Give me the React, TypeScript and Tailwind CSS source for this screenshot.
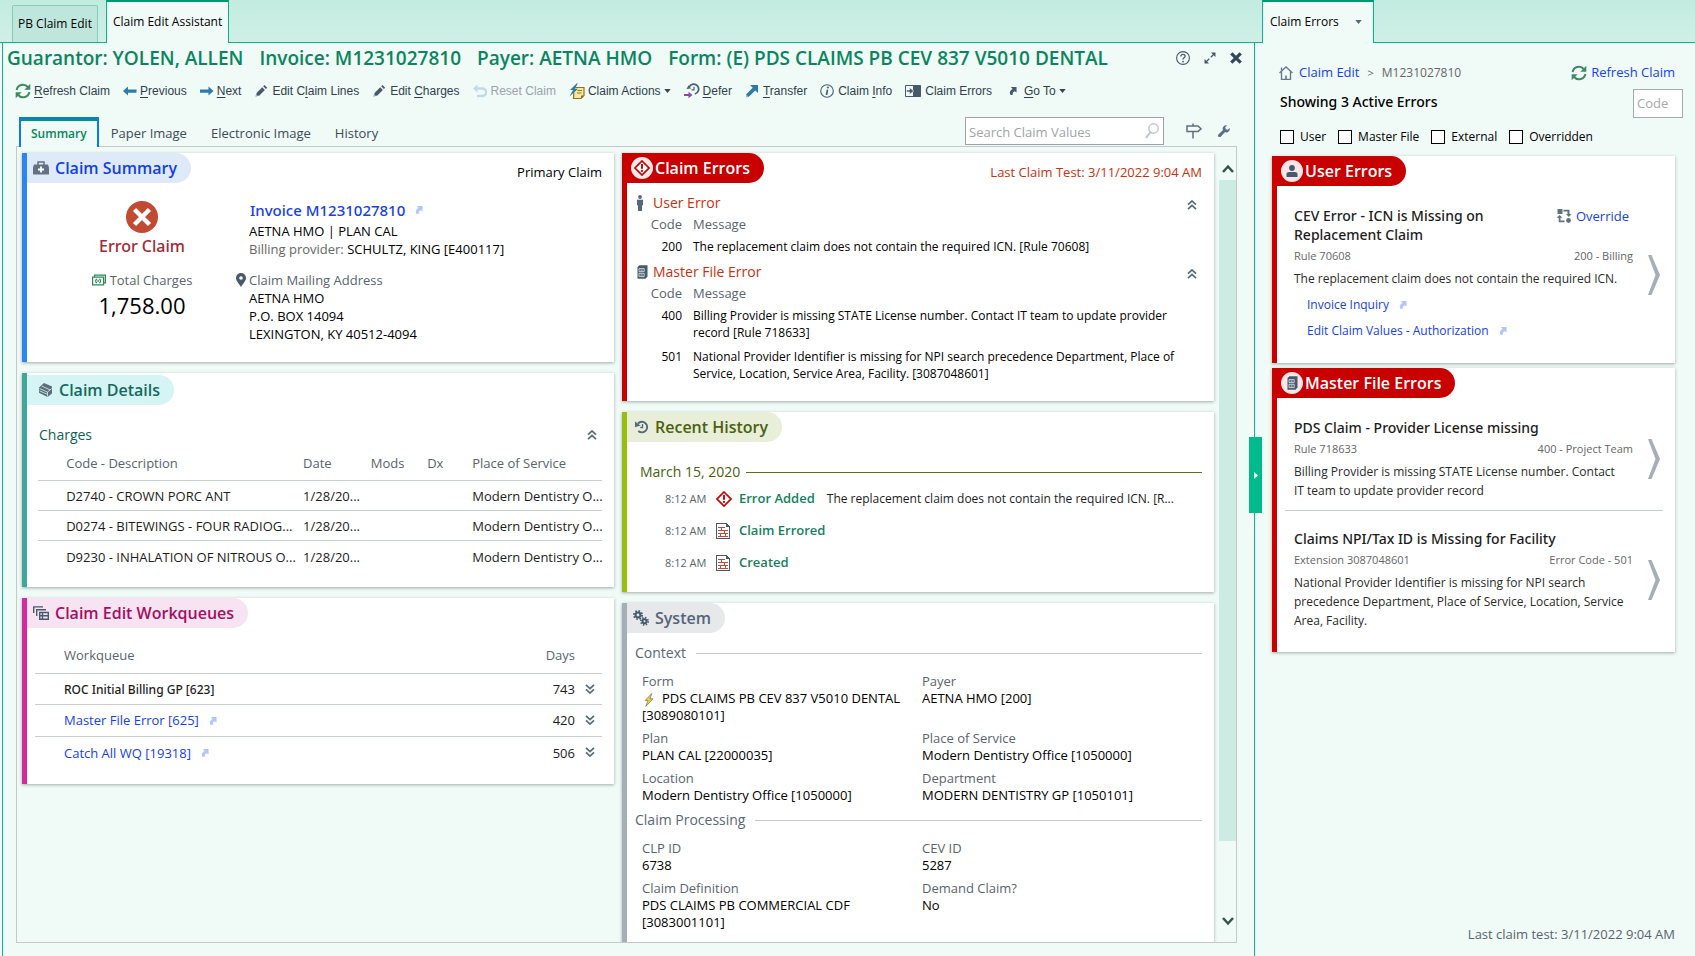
import React, { ReactNode } from "react";

/* ---------- icons ---------- */

type IconProps = { className?: string };

const RefreshIcon = ({ className = "size-4" }: IconProps) => (
  <svg viewBox="0 0 16 16" className={className} fill="none" stroke="#3f8a63" strokeWidth="2" aria-hidden="true">
    <path d="M1.6 7A6.400 6.400 0 0 1 12.800 4" />
    <path d="M14.400 9A6.400 6.400 0 0 1 3.200 12" />
    <path d="M15.300.8v6h-6z" fill="#3f8a63" stroke="none" />
    <path d="M.7 15.200v-6h6z" fill="#3f8a63" stroke="none" />
  </svg>
);

const ArrowIcon = ({ flip = false }: { flip?: boolean }) => (
  <svg viewBox="0 0 14 12" className="h-3 w-3.5" fill="#2f7ba8" aria-hidden="true">
    {flip ? <path d="M0 6l5-4.500v3h8.500v3.200H5v2.800z" /> : <path d="M13.500 6L8.500 1.500v3H0v3.200h8.500v2.800z" />}
  </svg>
);

const PencilIcon = () => (
  <svg viewBox="0 0 14 14" className="size-3.5" fill="#46596d" aria-hidden="true">
    <path d="M1.500 12.500l1.300-3.700L8.200 3.300l2.700 2.700-5.500 5.500z" />
    <path d="M9.200 2.300l1.300-1.300 2.700 2.700-1.300 1.300z" />
    <path d="M1.500 12.500l.8-2.300 1.500 1.500z" fill="#a9b8c4" />
  </svg>
);

const UndoIcon = () => (
  <svg viewBox="0 0 14 14" className="size-3.5" aria-hidden="true">
    <path d="M0 4.500L4.500.5v8z" fill="#c3dae6" />
    <path d="M3.500 4.500h6a3.500 3.500 0 0 1 0 7.500H4" fill="none" stroke="#c3dae6" strokeWidth="2.400" />
  </svg>
);

const ClaimActionsIcon = () => (
  <svg viewBox="0 0 16 16" className="size-4" aria-hidden="true">
    <path d="M5 4.500h10v8l-3 3H4.500z" fill="#f6e9a0" stroke="#8d7420" strokeWidth="1.200" />
    <path d="M15 12.500h-3v3z" fill="#8d7420" />
    <path d="M8.500 7.500h4.500M8 10h4.500" stroke="#8d7420" strokeWidth="1.100" />
    <path d="M7.500.5L1 7h3L.5 13.500 9 5.800H5.800L8.800.5z" fill="#2f7ba8" />
  </svg>
);

const DeferIcon = () => (
  <svg viewBox="0 0 16 16" className="size-4" fill="none" aria-hidden="true">
    <path d="M5.200 3.800A5 5 0 1 1 10.800 11" stroke="#4c6076" strokeWidth="1.800" />
    <path d="M10 3.800v3H7.500" stroke="#4c6076" strokeWidth="1.200" />
    <path d="M2.500 6L4.500 2.200l2.600 3.300z" fill="#4c6076" />
    <path d="M0 12h5" stroke="#8a4aa8" strokeWidth="2" />
    <path d="M4.500 8.800L8.500 12l-4 3.200z" fill="#8a4aa8" />
  </svg>
);

const TransferIcon = () => (
  <svg viewBox="0 0 14 14" className="size-3.5" aria-hidden="true">
    <path d="M5 1h8v8l-2.700-2.600-6.800 6.500L1 10.400l6.700-6.700z" fill="#2f7ba8" />
    <path d="M1 10.400l2.500 2.500L1 13.500z" fill="#8fb9cf" />
  </svg>
);

const InfoIcon = () => (
  <svg viewBox="0 0 16 16" className="size-3.5" fill="none" stroke="#4c6076" aria-hidden="true">
    <circle cx="8" cy="8" r="7.200" strokeWidth="1.300" />
    <path d="M8.600 6.500l-1.200 6" strokeWidth="2" />
    <circle cx="9" cy="4" r="1.200" fill="#4c6076" stroke="none" />
  </svg>
);

const PanelArrowIcon = () => (
  <svg viewBox="0 0 16 12" className="h-3 w-4" aria-hidden="true">
    <path d="M.5.5h15v11H.5z" fill="#f0faf7" stroke="#46596d" />
    <path d="M8 .5h7.500v11H8z" fill="#46596d" />
    <path d="M1.500 5h3V2.500L8.800 6 4.500 9.500V7h-3z" fill="#46596d" stroke="#f0faf7" strokeWidth=".6" />
  </svg>
);

const JumpIcon = ({ className = "size-2 text-[#b3c5ff]" }: IconProps) => (
  <svg viewBox="0 0 8 9" className={className} fill="currentColor" aria-hidden="true">
    <path d="M1.500 0H8v6.300L6.200 4.700C4.300 5.200 3.400 6.300 3.600 9H1.400C-.6 6.800.4 4 3.600 2.200z" />
  </svg>
);

const CaretDown = ({ className = "h-1 w-1.5 text-[#39444e]" }: IconProps) => (
  <svg viewBox="0 0 8 5" className={className} fill="currentColor" aria-hidden="true">
    <path d="M0 0h8L4 5z" />
  </svg>
);

const HelpIcon = () => (
  <svg viewBox="0 0 14 14" className="size-3.5" fill="none" stroke="#46596d" aria-hidden="true">
    <circle cx="7" cy="7" r="6.400" strokeWidth="1.100" />
    <path d="M4.900 5.400c0-2.800 4.200-2.700 4.200-.2 0 1.500-2.100 1.500-2.100 3.200" strokeWidth="1.300" />
    <circle cx="7" cy="10.600" r=".9" fill="#46596d" stroke="none" />
  </svg>
);

const ExpandIcon = () => (
  <svg viewBox="0 0 12 12" className="size-3" aria-hidden="true">
    <path d="M7 .5h4.500V5zM.5 7v4.500H5z" fill="#46596d" />
    <path d="M10 2L6.800 5.200M2 10l3.200-3.200" stroke="#46596d" strokeWidth="1.300" />
  </svg>
);

const CloseIcon = () => (
  <svg viewBox="0 0 12 12" className="size-3" aria-hidden="true">
    <path d="M1.300 1.300l9.400 9.400M10.700 1.300l-9.400 9.400" stroke="#33475b" strokeWidth="3.200" />
  </svg>
);

const SearchIcon = () => (
  <svg viewBox="0 0 14 16" className="h-4 w-3.5" fill="none" stroke="#bfc6cb" aria-hidden="true">
    <circle cx="8.500" cy="5.500" r="4.700" strokeWidth="1.400" />
    <path d="M5.400 9.200L1 14.800" strokeWidth="2" />
  </svg>
);

const SignpostIcon = () => (
  <svg viewBox="0 0 16 16" className="size-4" fill="none" stroke="#5b7083" strokeWidth="1.500" aria-hidden="true">
    <path d="M1 3h11l3 2.800-3 2.700H1z" />
    <path d="M7 .5V3M7 8.500v7" />
  </svg>
);

const WrenchIcon = () => (
  <svg viewBox="0 0 13 13" className="size-3" fill="#5b7083" aria-hidden="true">
    <path d="M12.600 3.200a3.700 3.700 0 0 1-5 4.500l-4.600 4.900a1.700 1.700 0 0 1-2.500-2.400l4.900-4.700A3.700 3.700 0 0 1 9.800.400L7.900 2.500l.5 2.100 2.100.5z" />
  </svg>
);

const DoubleChevron = ({ down = false }: { down?: boolean }) => (
  <svg viewBox="0 0 10 10" className="size-2.5" fill="none" stroke="#55697c" strokeWidth="1.700" aria-hidden="true">
    {down ? <path d="M1 .8l4 3.700 4-3.700M1 5.300L5 9l4-3.700" /> : <path d="M1 9.200l4-3.700 4 3.700M1 4.700L5 1l4 3.700" />}
  </svg>
);

const MedKitIcon = () => (
  <svg viewBox="0 0 16 14" className="h-3.5 w-4" aria-hidden="true">
    <path d="M5 4V1h6v3" fill="none" stroke="#607284" strokeWidth="1.500" />
    <path d="M1 3.500h14l1 3V13.500H0V6.500z" fill="#607284" />
    <path d="M8 5.500v6M5 8.500h6" stroke="#fff" strokeWidth="1.800" />
  </svg>
);

const BooksIcon = () => (
  <svg viewBox="0 0 14 14" className="size-3.5" aria-hidden="true">
    <path d="M0 4.500L5 0l8 3.500v7L8.500 14 0 9.800z" fill="#5c6e78" />
    <path d="M.5 5.500l8 3.600 4.300-3.700M.5 7.800l7.900 3.500M2.600 3l8.400 3.800M8.500 9v4.500" fill="none" stroke="#d4f5f3" strokeWidth=".8" />
  </svg>
);

const QueueIcon = () => (
  <svg viewBox="0 0 16 14" className="h-3.5 w-4" fill="none" stroke="#46596d" strokeWidth="1.400" aria-hidden="true">
    <path d="M.7 7V.9H10M3.700 10V3.700H13" />
    <path d="M6.700 6.500h8.600v6.800H6.700zM6.700 9.800h8.600M9.500 6.500v6.800" />
  </svg>
);

const AlertDiamond = ({ className = "size-4" }: IconProps) => (
  <svg viewBox="0 0 16 16" className={className} aria-hidden="true">
    <path d="M8 1l7 7-7 7-7-7z" fill="#fff" stroke="#c80000" strokeWidth="1.700" />
    <path d="M8 4v4.800" stroke="#c80000" strokeWidth="1.900" />
    <circle cx="8" cy="10.900" r="1.100" fill="#c80000" />
  </svg>
);

const PersonIcon = () => (
  <svg viewBox="0 0 6 16" className="h-4 w-1.5" fill="#55697c" aria-hidden="true">
    <circle cx="3" cy="2" r="1.900" />
    <path d="M0 4.800h6v5.400H5V16H1v-5.800H0z" />
  </svg>
);

const BustIcon = () => (
  <svg viewBox="0 0 12 12" className="size-3" fill="#46596d" aria-hidden="true">
    <circle cx="6" cy="3" r="2.900" />
    <path d="M.5 12V9.200c0-1.500 1-2.200 2.500-2.200h6c1.500 0 2.500.7 2.500 2.200V12z" />
  </svg>
);

const CabinetIcon = () => (
  <svg viewBox="0 0 11 14" className="h-3.5 w-[11px]" aria-hidden="true">
    <path d="M.5 2L2.500.3h8v11.200l-2 2.200h-8z" fill="#46596d" />
    <path d="M2 3.600h5.200v3H2zM2 8.300h5.200v3.300H2z" fill="none" stroke="#e4e9ed" strokeWidth=".8" />
    <path d="M3.600 5.100h2M3.600 10h2" stroke="#e4e9ed" strokeWidth=".9" />
  </svg>
);

const HistoryIcon = () => (
  <svg viewBox="0 0 14 14" className="size-3.5" fill="none" aria-hidden="true">
    <path d="M3 3.500A5.300 5.300 0 1 1 3.300 11" stroke="#55697c" strokeWidth="1.900" />
    <path d="M0 1.500L5.500 5.500 0 7.300z" fill="#55697c" />
    <path d="M7.500 4v3.500H5.300" stroke="#55697c" strokeWidth="1.300" />
  </svg>
);

const GearsIcon = () => (
  <svg viewBox="0 0 16 16" className="size-4" fill="none" stroke="#46596d" aria-hidden="true">
    <circle cx="5" cy="5" r="2.400" strokeWidth="2" />
    <circle cx="5" cy="5" r="4.100" strokeWidth="1.800" strokeDasharray="1.600 1.620" />
    <circle cx="11.500" cy="11.300" r="2" strokeWidth="1.900" />
    <circle cx="11.500" cy="11.300" r="3.600" strokeWidth="1.800" strokeDasharray="1.400 1.427" />
  </svg>
);

const CashIcon = () => (
  <svg viewBox="0 0 14 11" className="h-3 w-3.5" fill="none" stroke="#2e8557" strokeWidth="1.200" aria-hidden="true">
    <path d="M2.500 2.300V.7h10.900v7.600h-1.500" />
    <path d="M.6 2.600h11v7.700H.6z" />
    <path d="M5 4.600c-1.800.3-1.800 3.400 0 3.700M7.200 4.600c1.800.3 1.800 3.400 0 3.700M6.100 5.300v2.300" />
  </svg>
);

const PinIcon = () => (
  <svg viewBox="0 0 10 14" className="h-3.5 w-2.5" aria-hidden="true">
    <path d="M5 14C2.500 10 0 7.800 0 5a5 5 0 0 1 10 0c0 2.800-2.500 5-5 9z" fill="#46596d" />
    <circle cx="5" cy="5" r="1.800" fill="#fff" />
  </svg>
);

const DocErrorIcon = () => (
  <svg viewBox="0 0 14 16" className="h-4 w-3.5" fill="none" shapeRendering="crispEdges" aria-hidden="true">
    <path d="M.5.5h10l3 3v12H.5z" fill="#fff" stroke="#46596d" />
    <path d="M10 1v3h3z" fill="#46596d" />
    <path d="M2 4.500h7M2 7.500h10M2 10.500h10M2 13.500h10" stroke="#c24a32" />
    <path d="M5.500 5v2M8.500 8v2M4.500 11v2M9.500 11v2" stroke="#c24a32" />
  </svg>
);

const BoltIcon = () => (
  <svg viewBox="0 0 10 15" className="mr-2 ml-0.5 inline h-3.5 w-2.5" aria-hidden="true">
    <path d="M8 .5L1 8h3L1.500 14.500 9.300 6.200H6z" fill="#efd24a" stroke="#7d7350" strokeWidth=".8" />
  </svg>
);

const HomeIcon = () => (
  <svg viewBox="0 0 14 14" className="size-3.5" fill="none" stroke="#64788a" strokeWidth="1.300" aria-hidden="true">
    <path d="M.5 7L7 1l6.500 6" />
    <path d="M2.500 5.500v7.800h9V5.500M2.500 4.500V1.500" />
    <path d="M7 13.300V9.500" strokeWidth="1.600" />
  </svg>
);

const OverrideIcon = () => (
  <svg viewBox="0 0 15 14" className="h-3.5 w-4" fill="#607284" aria-hidden="true">
    <path d="M1 0h5v5H1zM7 .8h6v4.200h2L12.300 8 9.500 5H11V2.600H7zM3 6l3 2.800H4v2.600h4v1.800H2.200V8.800H0z" />
    <circle cx="12" cy="11.500" r="2.400" />
  </svg>
);

/* ---------- shared parts ---------- */

function Card({
  bar,
  pill,
  icon,
  title,
  aside,
  className = "",
  children,
}: {
  bar: string;
  pill: string;
  icon: ReactNode;
  title: string;
  aside?: ReactNode;
  className?: string;
  children: ReactNode;
}) {
  return (
    <section className={`border-l-5 bg-white shadow-[0_1px_3px_rgba(60,80,75,0.45)] ${bar} ${className}`}>
      <header className="flex items-start justify-between">
        <h2 className={`flex h-[30px] items-center rounded-r-full text-base font-semibold ${pill}`}>
          {icon}
          {title}
        </h2>
        {aside}
      </header>
      {children}
    </section>
  );
}

const RoundBadge = ({ children }: { children: ReactNode }) => (
  <span className="flex size-[22px] items-center justify-center rounded-full bg-[#fae6e6]">{children}</span>
);

/* ---------- toolbar ---------- */

const TOOLS: { icon: ReactNode; before?: string; key?: string; after?: string; caret?: boolean; disabled?: boolean; gap: string }[] = [
  { icon: <RefreshIcon />, key: "R", after: "efresh Claim", gap: "gap-[3px]" },
  { icon: <ArrowIcon flip />, key: "P", after: "revious", gap: "gap-[3px]" },
  { icon: <ArrowIcon />, key: "N", after: "ext", gap: "gap-[3px]" },
  { icon: <PencilIcon />, before: "Edit C", key: "l", after: "aim Lines", gap: "gap-1" },
  { icon: <PencilIcon />, before: "Edit ", key: "C", after: "harges", gap: "gap-1" },
  { icon: <UndoIcon />, before: "Reset Claim", disabled: true, gap: "gap-1" },
  { icon: <ClaimActionsIcon />, before: "Claim Actions", caret: true, gap: "gap-[3px]" },
  { icon: <DeferIcon />, key: "D", after: "efer", gap: "gap-[3px]" },
  { icon: <TransferIcon />, key: "T", after: "ransfer", gap: "gap-1" },
  { icon: <InfoIcon />, before: "Claim ", key: "I", after: "nfo", gap: "gap-1" },
  { icon: <PanelArrowIcon />, before: "Claim Errors", gap: "gap-1" },
  { icon: <JumpIcon className="mr-1 ml-1 size-2 text-[#46596d]" />, key: "G", after: "o To", caret: true, gap: "gap-[3px]" },
];

function Toolbar() {
  return (
    <div className="flex h-8 items-center gap-[13px] pl-3 font-['Liberation_Sans',sans-serif] text-xs text-[#2f3f4b]">
      {TOOLS.map((t, i) => (
        <button key={i} type="button" disabled={t.disabled} className={`flex items-center whitespace-nowrap disabled:text-[#9aa3a8] ${t.gap}`}>
          {t.icon}
          <span className="whitespace-pre">
            {t.before}
            {t.key && <span className="underline underline-offset-2">{t.key}</span>}
            {t.after}
          </span>
          {t.caret && <CaretDown className="h-1 w-[7px] text-[#39444e]" />}
        </button>
      ))}
    </div>
  );
}

/* ---------- left cards ---------- */

function ClaimSummary() {
  return (
    <Card
      bar="border-[#2b87ee]"
      pill="bg-[#dfeaf9] pr-3.5 pl-1.5 gap-1.5 text-[#1240e0]"
      icon={<MedKitIcon />}
      title="Claim Summary"
      aside={<span className="pt-2.5 pr-3 text-[13px] leading-[18px] text-black">Primary Claim</span>}
    >
      <div className="flex pb-[19px]">
        <div className="flex w-[209px] flex-col items-center pt-[18px] pl-[21px]">
          <svg viewBox="0 0 32 32" className="size-8" aria-hidden="true">
            <circle cx="16" cy="16" r="16" fill="#c24a32" />
            <path d="M8.500 8.500l15 15M23.500 8.500l-15 15" stroke="#fff" strokeWidth="4.500" />
          </svg>
          <div className="mt-0.5 font-['Noto_Sans',sans-serif] text-base leading-[22px] font-medium text-[#a02a35]">Error Claim</div>
          <div className="mt-3.5 flex items-center gap-1 text-[13px] leading-[18px] text-[#59646c]">
            <CashIcon />
            Total Charges
          </div>
          <div className="mt-0.5 text-[22px] leading-7 text-black">1,758.00</div>
        </div>
        <div className="pt-[15px] text-[13px] leading-[18px] text-black">
          <a href="#invoice" className="flex h-6 items-center gap-2.5 pl-3.5 font-['Noto_Sans',sans-serif] text-[15px] font-medium text-[#1540f0]">
            Invoice M1231027810
            <JumpIcon />
          </a>
          <p className="pl-[13px]">AETNA HMO | PLAN CAL</p>
          <p className="pl-[13px]">
            <span className="text-[#666]">Billing provider:</span> SCHULTZ, KING [E400117]
          </p>
          <div className="mt-[13px] flex items-center gap-[3px] text-[#59646c]">
            <PinIcon />
            Claim Mailing Address
          </div>
          <address className="pl-[13px] not-italic">
            AETNA HMO
            <br />
            P.O. BOX 14094
            <br />
            LEXINGTON, KY 40512-4094
          </address>
        </div>
      </div>
    </Card>
  );
}

const CHARGES = ["D2740 - CROWN PORC ANT", "D0274 - BITEWINGS - FOUR RADIOG...", "D9230 - INHALATION OF NITROUS O..."];

function ClaimDetails() {
  return (
    <Card
      bar="border-[#3fa699]"
      pill="bg-[#d4f5f3] pr-3.5 pl-3 gap-1.5 text-[#14695f]"
      icon={<BooksIcon />}
      title="Claim Details"
      className="pt-0.5 pb-[17px]"
    >
      <div className="mt-[18px] flex h-6 items-center justify-between pr-[17px] pl-3">
        <h3 className="text-sm text-[#0f5f57]">Charges</h3>
        <button type="button" aria-label="Collapse charges">
          <DoubleChevron />
        </button>
      </div>
      <div className="pr-3 pl-[11px]">
        <table className="w-full table-fixed text-left text-[13px] text-[#1c1c1c]">
          <colgroup>
            <col className="w-[5%]" />
            <col className="w-[42%]" />
            <col className="w-[12%]" />
            <col className="w-[10%]" />
            <col className="w-[8%]" />
            <col />
          </colgroup>
          <thead>
            <tr className="h-[33px] border-b border-[#c9cfcf] text-[#59646c]">
              <th />
              <th className="font-normal">Code - Description</th>
              <th className="font-normal">Date</th>
              <th className="font-normal">Mods</th>
              <th className="font-normal">Dx</th>
              <th className="font-normal">Place of Service</th>
            </tr>
          </thead>
          <tbody>
            {CHARGES.map((c) => (
              <tr key={c} className="h-[30px] border-b border-[#c9cfcf] whitespace-nowrap last:border-b-0">
                <td />
                <td className="pt-1">{c}</td>
                <td className="pt-1">1/28/20...</td>
                <td />
                <td />
                <td className="pt-1">Modern Dentistry O...</td>
              </tr>
            ))}
          </tbody>
        </table>
      </div>
    </Card>
  );
}

const QUEUES = [
  { name: "ROC Initial Billing GP [623]", days: 743, link: false },
  { name: "Master File Error [625]", days: 420, link: true },
  { name: "Catch All WQ [19318]", days: 506, link: true },
];

function Workqueues() {
  return (
    <Card
      bar="border-[#d42aa0]"
      pill="bg-[#f8e3f2] pr-3.5 pl-1.5 gap-1.5 text-[#a3105f]"
      icon={<QueueIcon />}
      title="Claim Edit Workqueues"
      className="pb-4"
    >
      <div className="mt-[11px] pr-3 pl-2">
        <table className="w-full text-left text-[13px] text-[#1c1c1c]">
          <thead>
            <tr className="h-[34px] border-b border-[#c9cfcf] text-[#59646c]">
              <th className="pl-[29px] font-normal">Workqueue</th>
              <th className="text-right font-normal">Days</th>
              <th className="w-[27px]" />
            </tr>
          </thead>
          <tbody>
            {QUEUES.map((q) => (
              <tr key={q.name} className="h-8 border-b border-[#c9cfcf] first:h-[31px] last:border-b-0">
                <td className="pt-0.5 pl-[29px]">
                  {q.link ? (
                    <a href="#queue" className="flex items-center gap-2.5 text-[#1540f0]">
                      {q.name}
                      <JumpIcon />
                    </a>
                  ) : (
                    <span className="font-['Noto_Sans',sans-serif] text-xs font-medium">{q.name}</span>
                  )}
                </td>
                <td className="pt-0.5 text-right">{q.days}</td>
                <td className="pl-2.5">
                  <button type="button" aria-label={`Expand ${q.name}`} className="block">
                    <DoubleChevron down />
                  </button>
                </td>
              </tr>
            ))}
          </tbody>
        </table>
      </div>
    </Card>
  );
}

/* ---------- middle cards ---------- */

function ErrorGroup({ icon, title, rows }: { icon: ReactNode; title: string; rows: [string, string][] }) {
  return (
    <div>
      <div className="flex h-5 items-center justify-between pr-[17px] pl-2">
        <h3 className="flex items-center text-sm text-[#c9300f]">
          <span className="flex w-[18px] items-center justify-start pl-0.5">{icon}</span>
          {title}
        </h3>
        <button type="button" aria-label={`Collapse ${title}`} className="pt-1">
          <DoubleChevron />
        </button>
      </div>
      <table className="mt-0.5 w-full text-xs">
        <thead>
          <tr className="text-[13px] text-[#59646c]">
            <th className="w-[55px] text-right leading-[18px] font-normal">Code</th>
            <th className="pl-[11px] text-left leading-[18px] font-normal">Message</th>
          </tr>
        </thead>
        <tbody>
          {rows.map(([code, msg]) => (
            <tr key={code} className="align-top text-black">
              <td className="pt-[5px] pb-0.5 text-right leading-[17px]">{code}</td>
              <td className="pt-[5px] pr-5 pb-0.5 pl-[11px] leading-[17px]">{msg}</td>
            </tr>
          ))}
        </tbody>
      </table>
    </div>
  );
}

function ClaimErrors() {
  return (
    <Card
      bar="border-[#c80000]"
      pill="bg-[#c80000] pr-3.5 pl-1 gap-0.5 text-white"
      icon={
        <RoundBadge>
          <AlertDiamond />
        </RoundBadge>
      }
      title="Claim Errors"
      className="pb-[17px]"
      aside={<span className="pt-2.5 pr-3 text-[13px] leading-[18px] text-[#c9300f]">Last Claim Test: 3/11/2022 9:04 AM</span>}
    >
      <div className="mt-2.5 flex flex-col gap-[5px]">
        <ErrorGroup icon={<PersonIcon />} title="User Error" rows={[["200", "The replacement claim does not contain the required ICN. [Rule 70608]"]]} />
        <ErrorGroup
          icon={<CabinetIcon />}
          title="Master File Error"
          rows={[
            ["400", "Billing Provider is missing STATE License number. Contact IT team to update provider record [Rule 718633]"],
            ["501", "National Provider Identifier is missing for NPI search precedence Department, Place of Service, Location, Service Area, Facility. [3087048601]"],
          ]}
        />
      </div>
    </Card>
  );
}

function RecentHistory() {
  const rows = [
    { icon: <AlertDiamond />, label: "Error Added", note: "The replacement claim does not contain the required ICN. [R..." },
    { icon: <DocErrorIcon />, label: "Claim Errored" },
    { icon: <DocErrorIcon />, label: "Created" },
  ];
  return (
    <Card
      bar="border-[#97bf0d]"
      pill="bg-[#e8eed8] pr-3.5 pl-2 gap-1.5 text-[#4a6010]"
      icon={<HistoryIcon />}
      title="Recent History"
      className="pb-[13px]"
    >
      <div className="mt-[19px] flex items-center gap-1.5 pr-3 pl-[13px] text-sm leading-[22px] text-[#4a6010]">
        March 15, 2020
        <span className="h-px flex-1 bg-[#5d7014]" />
      </div>
      <ul>
        {rows.map((r) => (
          <li key={r.label} className="flex h-8 items-center pr-3 pl-[38px] text-xs whitespace-nowrap">
            <span className="w-[50px] text-[11px] text-[#59646c]">8:12 AM</span>
            <span className="flex w-6 pl-px">{r.icon}</span>
            <span className="text-[13px] font-semibold text-[#16805c]">{r.label}</span>
            {r.note && <span className="pl-3 text-[#1c1c1c]">{r.note}</span>}
          </li>
        ))}
      </ul>
    </Card>
  );
}

function FieldGroup({ title, fields }: { title: string; fields: [string, ReactNode][] }) {
  return (
    <div>
      <h3 className="flex items-center gap-2.5 pr-3 pl-2 text-sm leading-[22px] text-[#59677a]">
        {title}
        <span className="h-px flex-1 bg-[#c4c8ca]" />
      </h3>
      <dl className="mt-2 grid grid-cols-[280px_1fr] gap-y-[5px] pl-[15px] text-[13px]">
        {fields.map(([label, value]) => (
          <div key={label}>
            <dt className="leading-[18px] text-[#59646c]">{label}</dt>
            <dd className="leading-[17px] text-black">{value}</dd>
          </div>
        ))}
      </dl>
    </div>
  );
}

function SystemCard() {
  return (
    <Card bar="border-[#a5afb8]" pill="bg-[#e6e8ea] pr-3.5 pl-1.5 gap-1.5 text-[#55647a]" icon={<GearsIcon />} title="System" className="pb-14">
      <div className="mt-[9px] flex flex-col gap-[5px]">
        <FieldGroup
          title="Context"
          fields={[
            [
              "Form",
              <>
                <BoltIcon />
                PDS CLAIMS PB CEV 837 V5010 DENTAL
                <br />
                [3089080101]
              </>,
            ],
            ["Payer", "AETNA HMO [200]"],
            ["Plan", "PLAN CAL [22000035]"],
            ["Place of Service", "Modern Dentistry Office [1050000]"],
            ["Location", "Modern Dentistry Office [1050000]"],
            ["Department", "MODERN DENTISTRY GP [1050101]"],
          ]}
        />
        <FieldGroup
          title="Claim Processing"
          fields={[
            ["CLP ID", "6738"],
            ["CEV ID", "5287"],
            [
              "Claim Definition",
              <>
                PDS CLAIMS PB COMMERCIAL CDF
                <br />
                [3083001101]
              </>,
            ],
            ["Demand Claim?", "No"],
          ]}
        />
      </div>
    </Card>
  );
}

/* ---------- right panel ---------- */

function ErrorItem({
  title,
  rule,
  code,
  text,
  override = false,
  links = [],
  className = "",
}: {
  title: string;
  rule: string;
  code: string;
  text: string;
  override?: boolean;
  links?: string[];
  className?: string;
}) {
  return (
    <article className={`flex items-center pl-[17px] ${className}`}>
      <div className="min-w-0 flex-1">
        <div className="flex items-start justify-between">
          <h3 className={`font-['Noto_Sans',sans-serif] text-sm leading-[19px] font-medium text-[#1c1c1c] ${override ? "w-[210px]" : ""}`}>{title}</h3>
          {override && (
            <button type="button" className="flex items-center gap-1 pr-1 text-[13px] leading-5 text-[#1540f0]">
              <OverrideIcon />
              Override
            </button>
          )}
        </div>
        <div className="mt-[3px] flex justify-between text-[11px] leading-[18px] text-[#666]">
          <span>{rule}</span>
          <span>{code}</span>
        </div>
        <p className="mt-1 pr-2 text-xs leading-[19px] text-[#2a2a2a]">{text}</p>
        {links.length > 0 && (
          <ul className="mt-1 pl-[13px] text-xs">
            {links.map((l) => (
              <li key={l} className="flex h-[26px] items-center">
                <a href="#edit" className="flex items-center gap-2.5 text-[#1540f0]">
                  {l}
                  <JumpIcon />
                </a>
              </li>
            ))}
          </ul>
        )}
      </div>
      <button type="button" aria-label={`Open ${title}`} className="ml-[15px] w-[27px]">
        <svg viewBox="0 0 12 40" className="h-10 w-3" aria-hidden="true">
          <path d="M0 0h3.500L12 20 3.500 40H0l7.500-20z" fill="#a5afb8" />
        </svg>
      </button>
    </article>
  );
}

function ErrorsPanel() {
  return (
    <div className="flex flex-1 flex-col bg-[#f0faf7] pt-3.5 pr-5 pl-[17px]">
      <div className="flex h-8 items-center justify-between pl-[7px]">
        <nav className="flex items-center gap-1.5 text-[13px] text-[#666]">
          <HomeIcon />
          <a href="#claim-edit" className="text-[#1540f0]">
            Claim Edit
          </a>
          <span className="px-0.5 text-[11px]">&gt;</span>
          <span className="text-xs">M1231027810</span>
        </nav>
        <button type="button" className="flex items-center gap-1 text-[13px] text-[#1540f0]">
          <RefreshIcon />
          Refresh Claim
        </button>
      </div>
      <div className="-mr-2 flex h-7 items-center justify-between pl-2">
        <h2 className="pb-0.5 font-['Noto_Sans',sans-serif] text-sm font-medium text-black">Showing 3 Active Errors</h2>
        <input
          aria-label="Code"
          placeholder="Code"
          className="h-[29px] w-[50px] border border-[#a5abad] bg-white px-[3px] text-[13px] placeholder:text-[#a8a8a8] focus:outline-none"
        />
      </div>
      <div className="mt-2 flex h-6 items-center gap-3 pl-2 text-xs text-black">
        {["User", "Master File", "External", "Overridden"].map((l) => (
          <label key={l} className="flex items-center gap-1.5">
            <input type="checkbox" className="size-3.5 appearance-none border border-black bg-white checked:bg-[#00ba8c]" />
            {l}
          </label>
        ))}
      </div>

      <Card
        bar="border-[#c80000]"
        pill="bg-[#c80000] pr-3.5 pl-1 gap-0.5 text-white"
        icon={
          <RoundBadge>
            <BustIcon />
          </RoundBadge>
        }
        title="User Errors"
        className="mt-[7px] pb-[19px]"
      >
        <ErrorItem
          className="pt-5"
          title="CEV Error - ICN is Missing on Replacement Claim"
          rule="Rule 70608"
          code="200 - Billing"
          text="The replacement claim does not contain the required ICN."
          override
          links={["Invoice Inquiry", "Edit Claim Values - Authorization"]}
        />
      </Card>

      <Card
        bar="border-[#c80000]"
        pill="bg-[#c80000] pr-3.5 pl-1 gap-0.5 text-white"
        icon={
          <RoundBadge>
            <CabinetIcon />
          </RoundBadge>
        }
        title="Master File Errors"
        className="mt-[5px] pb-[22px]"
      >
        <ErrorItem
          className="pt-5 pb-2.5"
          title="PDS Claim - Provider License missing"
          rule="Rule 718633"
          code="400 - Project Team"
          text="Billing Provider is missing STATE License number. Contact IT team to update provider record"
        />
        <hr className="mr-3 ml-2 border-[#c9cfcf]" />
        <ErrorItem
          className="pt-[18px]"
          title="Claims NPI/Tax ID is Missing for Facility"
          rule="Extension 3087048601"
          code="Error Code - 501"
          text="National Provider Identifier is missing for NPI search precedence Department, Place of Service, Location, Service Area, Facility."
        />
      </Card>

      <footer className="mt-auto pb-[13px] text-right text-[13px] leading-[18px] text-[#59646c]">Last claim test: 3/11/2022 9:04 AM</footer>
    </div>
  );
}

/* ---------- page ---------- */

export default function App() {
  return (
    <div className="flex h-screen bg-[#f0faf7] font-['Open_Sans','Noto_Sans',sans-serif]">
      <main className="relative flex min-w-0 flex-1 flex-col">
        <nav className="flex h-[43px] shrink-0 items-end border-b border-[#00ba8c] bg-gradient-to-b from-[#c2ebe0] to-[#d0f0e6] pl-3 text-xs text-black">
          <a href="#pb" className="flex h-[37px] items-center rounded-t-xs border border-b-0 border-[#80d0b8] bg-[#bfe6dc] px-[5px]">
            PB Claim Edit
          </a>
          <a href="#assistant" className="-mb-px ml-2 flex h-[43px] items-center border-x border-t-2 border-x-[#00ba8c] border-t-[#009970] bg-[#f0faf7] px-1.5 pb-0.5">
            Claim Edit Assistant
          </a>
        </nav>

        <div className="ml-0.5 flex min-h-0 flex-1 flex-col border-x border-[#00ba8c]">
          <header className="flex h-8 shrink-0 items-center justify-between pr-3 pb-0.5 pl-1">
            <h1 className="flex gap-4 text-[19px] font-semibold whitespace-nowrap text-[#0a8560]">
              <span>Guarantor: YOLEN, ALLEN</span>
              <span>Invoice: M1231027810</span>
              <span>Payer: AETNA HMO</span>
              <span>Form: (E) PDS CLAIMS PB CEV 837 V5010 DENTAL</span>
            </h1>
            <div className="flex items-center gap-3.5">
              <button type="button" aria-label="Help"><HelpIcon /></button>
              <button type="button" aria-label="Expand"><ExpandIcon /></button>
              <button type="button" aria-label="Close"><CloseIcon /></button>
            </div>
          </header>
          <Toolbar />

          <div className="relative flex h-[39px] shrink-0 items-end justify-between pr-6 pl-4">
            <div className="relative z-10 -mb-px flex text-[13px] text-[#3c4b55]" role="tablist">
              <button type="button" role="tab" aria-selected="true" className="h-[30px] border-x-2 border-t-2 border-[#0a78f5] bg-[#f0faf7]">
                <span className="flex h-full items-center border-t-2 border-[#009970] px-2.5 text-xs font-semibold text-[#0a8560]">Summary</span>
              </button>
              <button type="button" role="tab" aria-selected="false" className="pt-1 pl-3">Paper Image</button>
              <button type="button" role="tab" aria-selected="false" className="pt-1 pl-6">Electronic Image</button>
              <button type="button" role="tab" aria-selected="false" className="pt-1 pl-6">History</button>
            </div>
            <div className="flex items-center gap-4 pb-px">
              <label className="mr-1.5 flex h-7 w-[199px] items-center border border-[#9ea4a6] bg-white pr-1">
                <input aria-label="Search claim values" placeholder="Search Claim Values" className="min-w-0 flex-1 pt-1 pl-[3px] text-[13px] placeholder:text-[#9ea4a6] focus:outline-none" />
                <SearchIcon />
              </label>
              <button type="button" aria-label="Guide"><SignpostIcon /></button>
              <button type="button" aria-label="Settings"><WrenchIcon /></button>
            </div>
          </div>

          <div className="mr-[17px] mb-[13px] ml-[13px] flex min-h-0 flex-1 overflow-hidden border border-[#c4c8c8]">
            <div className="grid min-w-0 flex-1 grid-cols-2 items-start gap-2 pt-1.5 pr-[5px] pl-[5px]">
              <div className="flex flex-col gap-[11px]">
                <ClaimSummary />
                <ClaimDetails />
                <Workqueues />
              </div>
              <div className="flex flex-col gap-[11px]">
                <ClaimErrors />
                <RecentHistory />
                <SystemCard />
              </div>
            </div>
            <div className="flex w-[17px] shrink-0 flex-col items-center">
              <button type="button" aria-label="Scroll up" className="flex h-[33px] items-center pt-2.5">
                <svg viewBox="0 0 12 9" className="h-2.5 w-3" aria-hidden="true">
                  <path d="M1 7.500l5-5.500 5 5.500" fill="none" stroke="#35544b" strokeWidth="2.500" />
                </svg>
              </button>
              <div className="w-full flex-1 pb-[68px]">
                <div className="h-full bg-[#ccebe2]" />
              </div>
              <button type="button" aria-label="Scroll down" className="flex h-[33px] items-start pt-[7px]">
                <svg viewBox="0 0 12 9" className="h-2.5 w-3" aria-hidden="true">
                  <path d="M1 1.500L6 7l5-5.500" fill="none" stroke="#35544b" strokeWidth="2.500" />
                </svg>
              </button>
            </div>
          </div>
        </div>

        <button
          type="button"
          aria-label="Toggle side panel"
          className="absolute top-[437px] -right-[7px] z-20 flex h-[76px] w-[13px] items-center justify-center bg-[#00ba8c]"
        >
          <svg viewBox="0 0 4 7" className="h-[7px] w-1" aria-hidden="true">
            <path d="M0 0l4 3.500L0 7z" fill="#fff" />
          </svg>
        </button>
      </main>

      <aside className="flex w-[440px] shrink-0 flex-col">
        <nav className="flex h-[43px] shrink-0 border-b border-[#00ba8c] bg-gradient-to-b from-[#c2ebe0] to-[#d0f0e6] pl-[7px]">
          <button type="button" className="-mb-px flex h-[43px] items-center gap-4 border-x border-t-2 border-x-[#00ba8c] border-t-[#009970] bg-[#f0faf7] pr-[11px] pb-0.5 pl-[7px] text-xs text-black">
            Claim Errors
            <CaretDown className="h-1 w-[7px] text-[#55697c]" />
          </button>
        </nav>
        <ErrorsPanel />
      </aside>
    </div>
  );
}
